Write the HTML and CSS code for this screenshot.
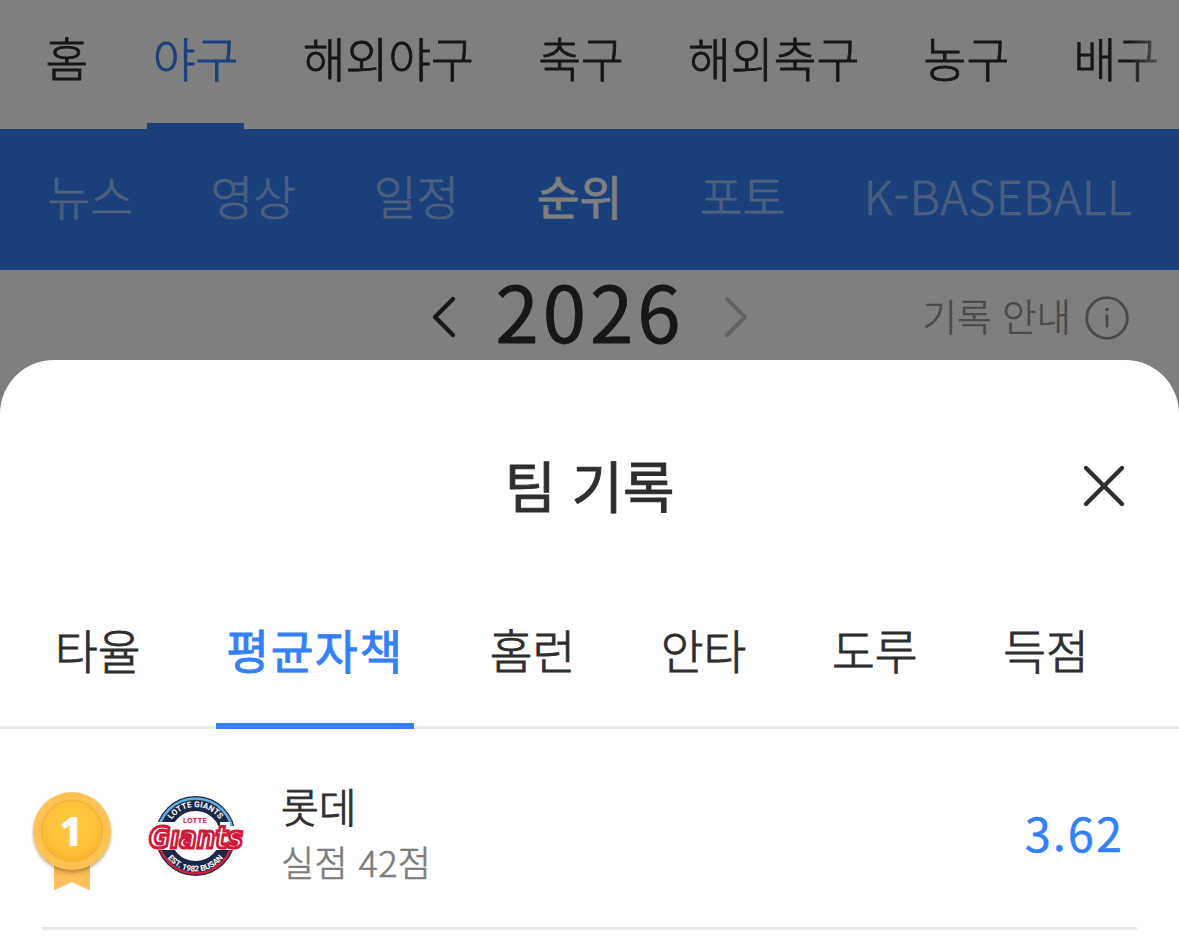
FILE: index.html
```html
<!DOCTYPE html>
<html lang="ko">
<head>
    <meta charset="UTF-8">
    <meta name="viewport" content="width=device-width, initial-scale=1.0">
    <title>팀 기록</title>
    <link rel="stylesheet" href="styles.css">
</head>
<body>

    <div class="page">
        <nav class="main-nav">
            <a>홈</a>
            <a class="active">야구</a>
            <a>해외야구</a>
            <a>축구</a>
            <a>해외축구</a>
            <a>농구</a>
            <a>배구</a>
        </nav>

        <nav class="sub-nav">
            <a>뉴스</a>
            <a>영상</a>
            <a>일정</a>
            <a class="active">순위</a>
            <a>포토</a>
            <a class="latin">K-BASEBALL</a>
        </nav>

        <div class="season">
            <div class="year">
                <svg width="26" height="44" viewBox="0 0 26 44"><path d="M22 4 4 22l18 18" fill="none" stroke="#2e2e2e" stroke-width="4.4" stroke-linecap="round" stroke-linejoin="round"/></svg>
                <span>2026</span>
                <svg width="26" height="44" viewBox="0 0 26 44"><path d="M4 4l18 18L4 40" fill="none" stroke="#c8c8c8" stroke-width="4" stroke-linecap="round" stroke-linejoin="round"/></svg>
            </div>
            <div class="guide">
                <span>기록 안내</span>
                <svg width="44" height="44" viewBox="0 0 44 44"><circle cx="22" cy="22" r="20.3" fill="none" stroke="#929292" stroke-width="2.8"/><circle cx="22" cy="13.5" r="1.8" fill="#929292"/><path d="M22 18.5v13" stroke="#929292" stroke-width="2.8"/></svg>
            </div>
        </div>
    </div>

    <div class="dim"></div>

    <section class="sheet">
        <header>
            <h2>팀 기록</h2>
            <button class="close">
                <svg width="44" height="44" viewBox="0 0 44 44"><path d="M4 4l36 36M40 4 4 40" stroke="#2e2e2e" stroke-width="4.4" stroke-linecap="round"/></svg>
            </button>
        </header>

        <nav class="tabs">
            <a>타율</a>
            <a class="active">평균자책</a>
            <a>홈런</a>
            <a>안타</a>
            <a>도루</a>
            <a>득점</a>
        </nav>

        <div class="row">
            <svg class="medal" width="88" height="106" viewBox="0 0 88 106">
                <defs>
                    <linearGradient id="ribbon" x1="0" y1="0" x2="0" y2="1">
                        <stop offset="0" stop-color="#eda83d"/>
                        <stop offset=".3" stop-color="#eda83d"/>
                        <stop offset=".7" stop-color="#fdc25a"/>
                    </linearGradient>
                    <radialGradient id="coin" cx=".5" cy=".42" r=".56">
                        <stop offset="0" stop-color="#ffcb42"/>
                        <stop offset=".7" stop-color="#ffc23a"/>
                        <stop offset="1" stop-color="#f9b532"/>
                    </radialGradient>
                    <filter id="shadow" x="-20%" y="-20%" width="140%" height="150%">
                        <feDropShadow dx="0" dy="2.5" stdDeviation="1.6" flood-color="#7d6534" flood-opacity=".5"/>
                    </filter>
                </defs>
                <path d="M26 66h36v36.500q0 2-2 1L44 96 28 103.500q-2 1-2-1z" fill="url(#ribbon)"/>
                <circle cx="44" cy="45" r="39" fill="#ffc252" filter="url(#shadow)"/>
                <circle cx="44" cy="45" r="30.500" fill="url(#coin)" stroke="#f6b136" stroke-width="1.500"/>
                <text class="rank" x="43" y="59.500">1</text>
            </svg>

            <svg class="logo" width="110" height="84" viewBox="0 0 110 84">
                <defs>
                    <path id="arc-top" d="M23.500 42a29 29 0 0 1 58 0"/>
                    <path id="arc-bottom" d="M17 42a35.500 35.500 0 0 0 71 0"/>
                </defs>
                <circle cx="52.500" cy="42" r="32.500" fill="#fff" stroke="#1b2747" stroke-width="15"/>
                <path d="M15 42a37.500 37.500 0 0 1 75 0" fill="none" stroke="#65aee0" stroke-width="2.600"/>
                <path d="M15 42a37.500 37.500 0 0 0 75 0" fill="none" stroke="#c9203f" stroke-width="2.600"/>
                <text class="ring"><textPath href="#arc-top" startOffset="50%" textLength="56">LOTTE GIANTS</textPath></text>
                <text class="ring"><textPath href="#arc-bottom" startOffset="50%" textLength="64">EST. 1982 BUSAN</textPath></text>
                <text class="lotte" x="52" y="28.500" textLength="24" lengthAdjust="spacingAndGlyphs">LOTTE</text>
                <!-- white plate behind the wordmark -->
                <path d="M8 28h24v4h45v-4h10v4h18l-7 24H2z" fill="#fff"/>
                <text class="giants" x="53" y="54" textLength="94" lengthAdjust="spacingAndGlyphs">Gıants</text>
            </svg>

            <div class="team">
                <strong>롯데</strong>
                <span>실점 42점</span>
            </div>
            <div class="value">3.62</div>
        </div>
    </section>

</body>
</html>
```
FILE: styles.css
```css
* {
    margin: 0;
    padding: 0;
    box-sizing: border-box;
}

body {
    position: relative;
    width: 1179px;
    height: 948px;
    overflow: hidden;
    background-color: #fff;
    color: #2e2e2e;
    font-family: "Noto Sans CJK KR", sans-serif;
    font-weight: 300;
    -webkit-text-stroke-width: 0.9px;
}

svg {
    display: block;
    flex: none;
    -webkit-text-stroke-width: 0;
}

.page {
    height: 360px;
}

.main-nav {
    display: flex;
    gap: 52.4px;
    height: 129px;
    padding-left: 39.5px;
    font-size: 46.5px;
    line-height: 114px;
    white-space: nowrap;
    -webkit-mask-image: linear-gradient(to right, #000 1130px, transparent 1179px);
    mask-image: linear-gradient(to right, #000 1130px, transparent 1179px);
}

.main-nav a {
    height: 129px;
    padding: 0 6px;
}

.main-nav .active {
    color: #3480f8;
    border-bottom: 6px solid #3480f8;
}

.sub-nav {
    display: flex;
    gap: 77.5px;
    height: 141px;
    padding-left: 47.5px;
    background-color: #3480f8;
    color: rgba(255, 255, 255, 0.45);
    font-size: 46.5px;
    line-height: 132px;
    white-space: nowrap;
    -webkit-text-stroke-width: 0.6px;
}

.sub-nav .active {
    color: #fff;
    font-weight: 400;
    -webkit-text-stroke-width: 0.8px;
}

.sub-nav .latin {
    padding-left: 1px;
    letter-spacing: 0.7px;
}

.season {
    display: flex;
    justify-content: flex-end;
    height: 90px;
}

.year {
    display: flex;
    align-items: center;
    margin-right: 174px;
    gap: 38px;
    height: 94px;
}

.year span {
    width: 190px;
    font-size: 78px;
    font-weight: 400;
    letter-spacing: 4px;
    line-height: 94px;
    padding-left: 1px;
    padding-bottom: 17px;
    -webkit-text-stroke-width: 0.8px;
}

.guide {
    display: flex;
    align-items: center;
    gap: 14px;
    height: 96px;
    margin-right: 50px;
    color: #929292;
    font-size: 37.5px;
    -webkit-text-stroke-width: 0.5px;
}

.guide span {
    padding-bottom: 7px;
}

/* dimmed page behind the sheet */
.dim {
    position: absolute;
    inset: 0;
    background-color: rgba(0, 0, 0, 0.5);
}

.sheet {
    position: absolute;
    left: 0;
    right: 0;
    top: 360px;
    bottom: 0;
    background-color: #fff;
    border-radius: 54px 54px 0 0;
}

.sheet header {
    display: flex;
    align-items: center;
    height: 252px;
    padding: 0 53px 0 97px;
}

.sheet h2 {
    flex: 1;
    padding-bottom: 6px;
    text-align: center;
    font-size: 56px;
    font-weight: 400;
}

.close {
    border: none;
    background: none;
}

.tabs {
    display: flex;
    gap: 65.6px;
    height: 117px;
    padding-left: 45px;
    border-bottom: 3px solid #e9e9e9;
    font-size: 46.5px;
    line-height: 73px;
}

.tabs a {
    height: 117px;
    padding: 0 10px;
}

.tabs .active {
    color: #3480f8;
    font-weight: 400;
    letter-spacing: 1.7px;
    border-bottom: 6px solid #3480f8;
}

.row {
    display: flex;
    align-items: center;
    height: 201px;
    margin: 0 42px;
    border-bottom: 3px solid #e9e9e9;
}

.medal {
    margin-left: -14px;
    margin-top: 22px;
}

.rank {
    fill: #fff;
    font-family: "Noto Sans", sans-serif;
    font-size: 41px;
    font-weight: 800;
    text-anchor: middle;
}

.logo {
    margin-left: 27px;
    margin-top: 16px;
}

.ring {
    fill: #fff;
    font-family: Roboto, sans-serif;
    font-size: 8.2px;
    font-weight: 700;
    text-anchor: middle;
}

.lotte {
    fill: #c9203f;
    font-family: Inter, sans-serif;
    font-size: 6.5px;
    font-weight: 700;
    text-anchor: middle;
}

.giants {
    fill: #fff;
    stroke: #d2193b;
    stroke-width: 3.2px;
    font-family: "DejaVu Sans", sans-serif;
    font-size: 31px;
    font-weight: 700;
    font-style: italic;
    text-anchor: middle;
}

.team {
    flex: 1;
    display: flex;
    flex-direction: column;
    margin-left: 28px;
    margin-top: 10px;
}

.team strong {
    font-size: 41px;
    font-weight: 300;
    line-height: 56px;
}

.team span {
    color: #7c7c7c;
    font-size: 36px;
    line-height: 56px;
    letter-spacing: 0.4px;
    -webkit-text-stroke-width: 0.6px;
}

.value {
    margin-top: 6px;
    margin-right: 13px;
    color: #3480f8;
    font-size: 47px;
    letter-spacing: 2px;
    font-weight: 400;
    -webkit-text-stroke-width: 0.4px;
}
```
